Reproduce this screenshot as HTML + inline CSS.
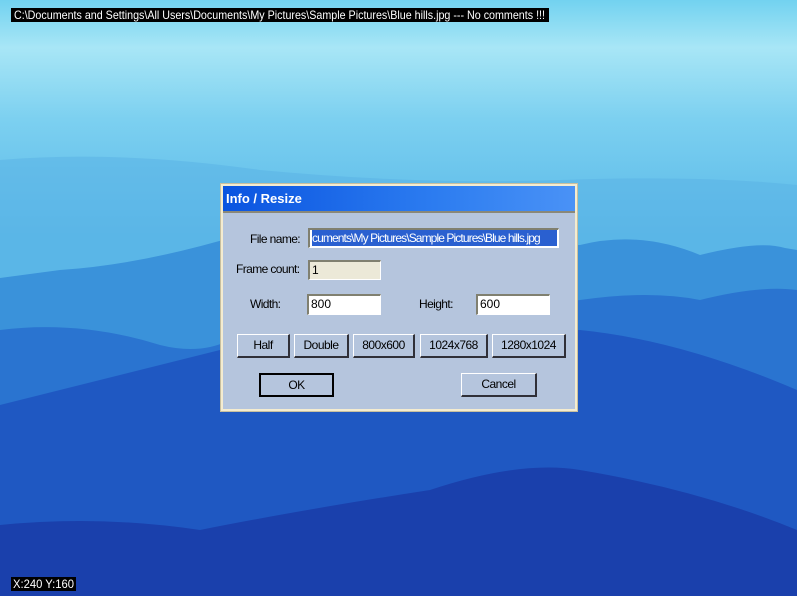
<!DOCTYPE html>
<html><head><meta charset="utf-8"><style>
body{margin:0;width:797px;height:596px;overflow:hidden;position:relative;font-family:"Liberation Sans",sans-serif;background:#1a3fae}
.abs{position:absolute}
.dlg{left:221px;top:184px;width:352px;height:223px;border:2px solid #f4ecd0;background:#b5c5dd;box-shadow:0 0 0 1px #c8c0a0}
.title{left:0;top:0;width:352px;height:25px;background:linear-gradient(90deg,#0a54e0,#2c7cf0 60%,#4a92f6);border-bottom:2px solid #8a8878}
.inp{position:absolute;background:#fff;border-top:2px solid #808070;border-left:2px solid #808070;border-right:1px solid #fff;border-bottom:1px solid #fff;box-sizing:border-box;font-size:12px;line-height:16px;padding-left:2px;color:#000;overflow:hidden}
.btn{position:absolute;box-sizing:border-box;background:#b5c5dd;border-top:1px solid #fff;border-left:1px solid #fff;border-right:2px solid #303038;border-bottom:2px solid #303038;font-size:12px;text-align:center;line-height:20px;color:#000;letter-spacing:-0.5px}
.lbl{position:absolute;font-size:12px;color:#000;letter-spacing:-0.6px}
</style></head><body>
<svg class="abs" style="left:0;top:0" width="797" height="596">
<defs><linearGradient id="sky" x1="0" y1="0" x2="0" y2="1">
<stop offset="0" stop-color="#72d2f0"/><stop offset="0.08" stop-color="#a8e6f6"/><stop offset="0.2" stop-color="#7cd0f0"/><stop offset="0.4" stop-color="#58b8e8"/></linearGradient></defs>
<rect width="797" height="596" fill="url(#sky)"/>
<path d="M0 160 Q120 150 260 170 Q420 185 560 180 Q700 175 797 185 L797 596 L0 596Z" fill="#5cb4e6" opacity="0.6"/>
<path d="M0 278 L60 270 Q140 265 240 235 Q300 240 330 250 L580 245 Q640 230 700 255 Q760 240 785 248 L797 250 L797 596 L0 596Z" fill="#3a92da"/>
<path d="M0 330 Q80 320 160 345 Q200 355 230 340 L580 300 Q650 290 700 300 Q760 285 797 290 L797 596 L0 596Z" fill="#2a74d0"/>
<path d="M0 405 Q100 380 220 350 L580 330 Q680 340 797 390 L797 596 L0 596Z" fill="#1f58c2"/>
<path d="M0 525 Q100 515 200 530 Q300 510 430 490 Q520 460 580 470 Q700 490 797 530 L797 596 L0 596Z" fill="#1a40ac"/>
</svg>
<div class="abs" style="left:11px;top:8px;width:538px;height:14px;background:#000"></div>
<svg class="abs" style="left:0;top:0" width="797" height="596">
<text x="14" y="19" font-family="Liberation Sans" font-size="12" fill="#fff" textLength="531" lengthAdjust="spacingAndGlyphs">C:\Documents and Settings\All Users\Documents\My Pictures\Sample Pictures\Blue hills.jpg --- No comments !!!</text>
<text x="13" y="588" font-family="Liberation Sans" font-size="12" fill="#fff" textLength="61" lengthAdjust="spacingAndGlyphs" transform="translate(0,0)"> </text>
</svg>
<div class="abs" style="left:11px;top:577px;width:65px;height:14px;background:#000"></div>
<svg class="abs" style="left:0;top:0" width="797" height="596">
<text x="13" y="588" font-family="Liberation Sans" font-size="12" fill="#fff" textLength="61" lengthAdjust="spacingAndGlyphs">X:240 Y:160</text>
</svg>
<div class="abs dlg">
 <div class="abs title"><span class="abs" style="left:3px;top:5px;color:#fff;font-weight:bold;font-size:13px">Info / Resize</span></div>
 <span class="lbl" style="left:27px;top:46px">File name:</span>
 <div class="inp" style="left:85px;top:42px;width:251px;height:20px"><span style="background:#2a60d0;color:#fff;white-space:nowrap;display:inline-block;width:245px;overflow:hidden;letter-spacing:-0.9px">cuments\My Pictures\Sample Pictures\Blue hills.jpg</span></div>
 <span class="lbl" style="left:13px;top:76px">Frame count:</span>
 <div class="inp" style="left:85px;top:74px;width:73px;height:20px;background:#ece9d8">1</div>
 <span class="lbl" style="left:27px;top:111px">Width:</span>
 <div class="inp" style="left:84px;top:108px;width:74px;height:21px">800</div>
 <span class="lbl" style="left:196px;top:111px">Height:</span>
 <div class="inp" style="left:253px;top:108px;width:74px;height:21px">600</div>
 <div class="btn" style="left:14px;top:148px;width:53px;height:24px">Half</div>
 <div class="btn" style="left:71px;top:148px;width:55px;height:24px">Double</div>
 <div class="btn" style="left:130px;top:148px;width:62px;height:24px">800x600</div>
 <div class="btn" style="left:197px;top:148px;width:68px;height:24px">1024x768</div>
 <div class="btn" style="left:269px;top:148px;width:74px;height:24px">1280x1024</div>
 <div class="btn" style="left:36px;top:187px;width:75px;height:24px;border:2px solid #000">OK</div>
 <div class="btn" style="left:238px;top:187px;width:76px;height:24px">Cancel</div>
</div>
</body></html>
